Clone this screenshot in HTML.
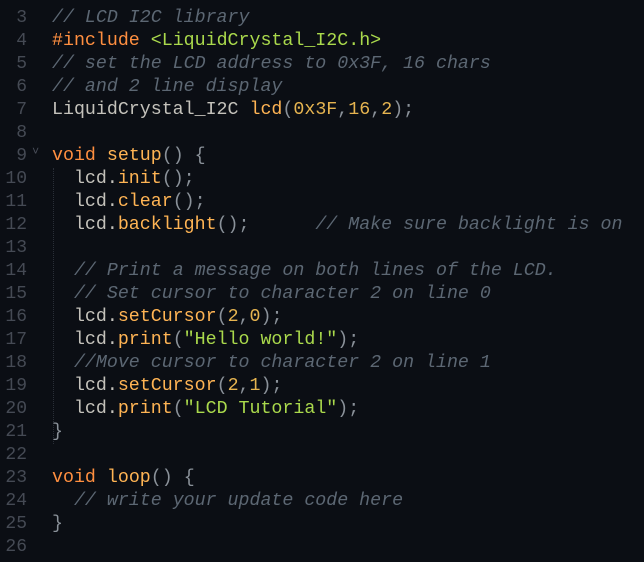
<html><head><style>
body{margin:0;background:#0b0e14;width:644px;height:562px;overflow:hidden;font-family:"Liberation Mono",monospace;font-size:18.3px;}
.l{position:absolute;left:0;height:23px;line-height:23px;white-space:pre;color:#c4c2bb;margin-top:2px}
.n{position:absolute;left:0;width:27px;text-align:right;color:#454a54;font-size:18px;}
.c{position:absolute;left:52px;}
.cm{color:#5c6773;font-style:italic}.k{color:#ff8f40}.f{color:#ffb454}.s{color:#aad94c}.d{color:#e6b450}.p{color:#8a9199}
.g{position:absolute;left:53px;width:1px;border-left:1px dotted #2a2f38;}
</style></head><body>
<div class="g" style="top:168px;height:276px"></div>
<div class="l" style="top:5px"><span class="n">3</span><span class="c"><span class="cm">// LCD I2C library</span></span></div>
<div class="l" style="top:28px"><span class="n">4</span><span class="c"><span class="k">#include</span> <span class="s">&lt;LiquidCrystal_I2C.h&gt;</span></span></div>
<div class="l" style="top:51px"><span class="n">5</span><span class="c"><span class="cm">// set the LCD address to 0x3F, 16 chars</span></span></div>
<div class="l" style="top:74px"><span class="n">6</span><span class="c"><span class="cm">// and 2 line display</span></span></div>
<div class="l" style="top:97px"><span class="n">7</span><span class="c">LiquidCrystal_I2C <span class="f">lcd</span><span class="p">(</span><span class="d">0x3F</span><span class="p">,</span><span class="d">16</span><span class="p">,</span><span class="d">2</span><span class="p">);</span></span></div>
<div class="l" style="top:120px"><span class="n">8</span></div>
<div class="l" style="top:143px"><span class="n">9</span><span style="position:absolute;left:32px;color:#4a4f5a;font-size:12px;top:-4px">˅</span><span class="c"><span class="k">void</span> <span class="f">setup</span><span class="p">()</span> <span class="p">{</span></span></div>
<div class="l" style="top:166px"><span class="n">10</span><span class="c">  lcd.<span class="f">init</span><span class="p">();</span></span></div>
<div class="l" style="top:189px"><span class="n">11</span><span class="c">  lcd.<span class="f">clear</span><span class="p">();</span></span></div>
<div class="l" style="top:212px"><span class="n">12</span><span class="c">  lcd.<span class="f">backlight</span><span class="p">();</span>      <span class="cm">// Make sure backlight is on</span></span></div>
<div class="l" style="top:235px"><span class="n">13</span></div>
<div class="l" style="top:258px"><span class="n">14</span><span class="c">  <span class="cm">// Print a message on both lines of the LCD.</span></span></div>
<div class="l" style="top:281px"><span class="n">15</span><span class="c">  <span class="cm">// Set cursor to character 2 on line 0</span></span></div>
<div class="l" style="top:304px"><span class="n">16</span><span class="c">  lcd.<span class="f">setCursor</span><span class="p">(</span><span class="d">2</span><span class="p">,</span><span class="d">0</span><span class="p">);</span></span></div>
<div class="l" style="top:327px"><span class="n">17</span><span class="c">  lcd.<span class="f">print</span><span class="p">(</span><span class="s">"Hello world!"</span><span class="p">);</span></span></div>
<div class="l" style="top:350px"><span class="n">18</span><span class="c">  <span class="cm">//Move cursor to character 2 on line 1</span></span></div>
<div class="l" style="top:373px"><span class="n">19</span><span class="c">  lcd.<span class="f">setCursor</span><span class="p">(</span><span class="d">2</span><span class="p">,</span><span class="d">1</span><span class="p">);</span></span></div>
<div class="l" style="top:396px"><span class="n">20</span><span class="c">  lcd.<span class="f">print</span><span class="p">(</span><span class="s">"LCD Tutorial"</span><span class="p">);</span></span></div>
<div class="l" style="top:419px"><span class="n">21</span><span class="c"><span class="p">}</span></span></div>
<div class="l" style="top:442px"><span class="n">22</span></div>
<div class="l" style="top:465px"><span class="n">23</span><span class="c"><span class="k">void</span> <span class="f">loop</span><span class="p">()</span> <span class="p">{</span></span></div>
<div class="l" style="top:488px"><span class="n">24</span><span class="c">  <span class="cm">// write your update code here</span></span></div>
<div class="l" style="top:511px"><span class="n">25</span><span class="c"><span class="p">}</span></span></div>
<div class="l" style="top:534px"><span class="n">26</span></div>
</body></html>
